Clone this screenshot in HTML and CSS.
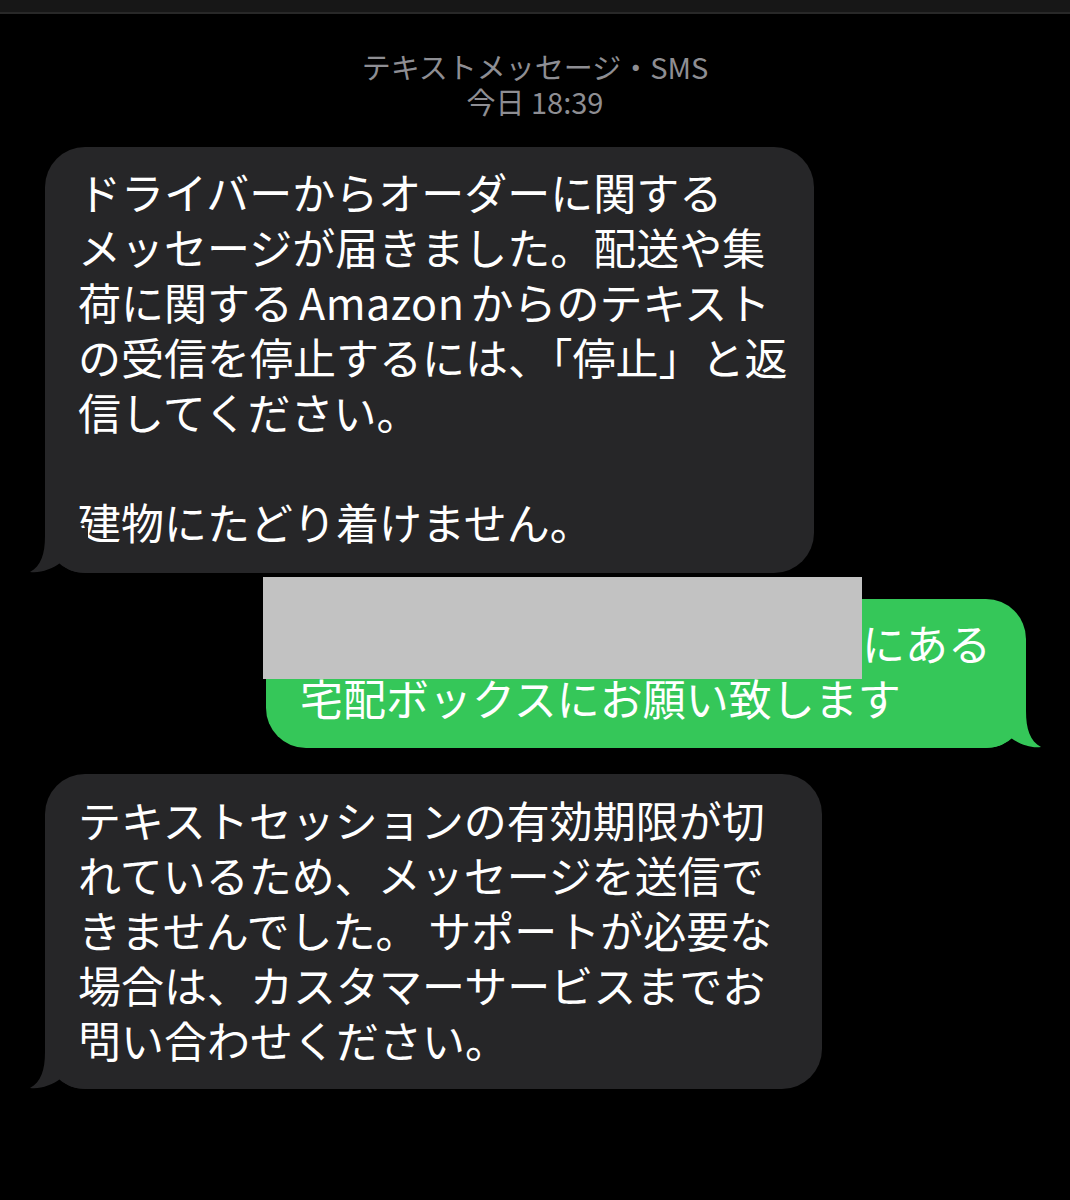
FILE: index.html
```html
<!DOCTYPE html>
<html lang="ja">
<head>
<meta charset="utf-8">
<title>SMS</title>
<link rel="stylesheet" href="styles.css">
</head>
<body>
<div class="topbar"></div>
<header class="meta">
  <div class="meta-line">テキストメッセージ・SMS</div>
  <div class="meta-line">今日 18:39</div>
</header>
<main class="thread">
  <div class="row row-in">
    <div class="bubble bubble-in b1">
      <div class="line">ドライバーからオーダーに関する</div>
      <div class="line">メッセージが届きました。配送や集</div>
      <div class="line">荷に関する<span class="latin">Amazon</span>からのテキスト</div>
      <div class="line">の受信を停止するには、「停止」と返</div>
      <div class="line">信してください。</div>
      <div class="line">&nbsp;</div>
      <div class="line">建物にたどり着けません。</div>
      <svg class="tail tail-in" viewBox="0 0 60 45" width="60" height="45"><path d="M17 0 L17 8 C17 26 13 38 2 44 C12 45.5 24 41 32 35 C39 42 47 45 60 45 L60 0 Z"/></svg>
    </div>
  </div>
  <div class="row row-out">
    <div class="bubble bubble-out">
      <div class="line"><span class="hidden-part"></span>にある</div>
      <div class="line">宅配ボックスにお願い致します</div>
      <div class="redact"></div>
      <svg class="tail tail-out" viewBox="0 0 60 45" width="60" height="45"><path d="M17 0 L17 8 C17 26 13 38 2 44 C12 45.5 24 41 32 35 C39 42 47 45 60 45 L60 0 Z"/></svg>
    </div>
  </div>
  <div class="row row-in">
    <div class="bubble bubble-in b3">
      <div class="line">テキストセッションの有効期限が切</div>
      <div class="line">れているため、メッセージを送信で</div>
      <div class="line">きませんでした。 サポートが必要な</div>
      <div class="line">場合は、カスタマーサービスまでお</div>
      <div class="line">問い合わせください。</div>
      <svg class="tail tail-in" viewBox="0 0 60 45" width="60" height="45"><path d="M17 0 L17 8 C17 26 13 38 2 44 C12 45.5 24 41 32 35 C39 42 47 45 60 45 L60 0 Z"/></svg>
    </div>
  </div>
</main>
</body>
</html>
```

FILE: styles.css
```css
html, body {
  margin: 0;
  padding: 0;
  background: #000;
}
body {
  width: 1070px;
  height: 1200px;
  overflow: hidden;
  font-family: "Noto Sans CJK JP", "Noto Sans", sans-serif;
  color: #fff;
}
.topbar {
  height: 12px;
  background: #171717;
  border-bottom: 2px solid #282828;
}
.meta {
  padding-top: 35px;
  text-align: center;
  color: #8e8e93;
  font-size: 29px;
  line-height: 35px;
}
.thread {
  display: flex;
  flex-direction: column;
  gap: 26px;
  padding: 28px 0 0;
}
.row {
  display: flex;
}
.row-in {
  justify-content: flex-start;
  padding-left: 45px;
}
.row-out {
  justify-content: flex-end;
  padding-right: 44px;
}
.bubble {
  position: relative;
  box-sizing: border-box;
  border-radius: 40px;
  font-size: 43px;
  line-height: 55px;
}
.line {
  white-space: nowrap;
}
.latin {
  margin: 0 6px;
  letter-spacing: 0.5px;
}
.bubble-in {
  background: #262628;
  padding: 17px 20px 24px 33px;
}
.bubble-in .tail {
  fill: #262628;
}
.b1 {
  width: 769px;
}
.b3 {
  width: 777px;
  padding-top: 18px;
  padding-bottom: 22px;
}
.bubble-out {
  background: #35c759;
  width: 760px;
  padding: 16px 20px 23px 34px;
}
.bubble-out .tail {
  fill: #35c759;
}
.hidden-part {
  display: inline-block;
  width: 562px;
}
.tail {
  position: absolute;
  bottom: 0;
  display: block;
}
.tail-in {
  left: -17px;
}
.tail-out {
  right: -17px;
  transform: scaleX(-1);
}
.redact {
  position: absolute;
  left: -3px;
  top: -22px;
  width: 599px;
  height: 102px;
  background: #c2c2c2;
}
```
